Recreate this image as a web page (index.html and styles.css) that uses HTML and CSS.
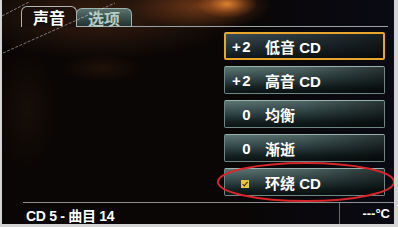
FILE: index.html
```html
<!DOCTYPE html>
<html lang="zh-CN">
<head>
<meta charset="utf-8">
<title>声音</title>
<link rel="stylesheet" href="styles.css">
</head>
<body>
<div class="screen">
  <div class="tabs">
    <div class="tab tab-active">声音</div>
    <div class="tab tab-idle">选项</div>
    <div class="tab-rule"></div>
  </div>
  <div class="content">
    <div class="btn btn-focus"><span class="val">+2</span><span class="lbl">低音 CD</span></div>
    <div class="btn"><span class="val">+2</span><span class="lbl">高音 CD</span></div>
    <div class="btn"><span class="val">0</span><span class="lbl">均衡</span></div>
    <div class="btn"><span class="val">0</span><span class="lbl">渐逝</span></div>
    <div class="btn"><span class="val"><span class="check"><svg viewBox="0 0 8 8" width="8" height="8"><path d="M1.6 4.2 L3.3 5.9 L6.6 1.8" fill="none" stroke="#4a3a10" stroke-width="1.2"/></svg></span></span><span class="lbl">环绕 CD</span></div>
  </div>
  <div class="footer">
    <div class="track">CD 5 - 曲目 14</div>
    <div class="temp">---°C</div>
  </div>
  <svg class="overlay" viewBox="0 0 392 224" width="392" height="224">
    <line x1="0" y1="16" x2="27" y2="2" stroke="rgba(255,255,255,0.55)" stroke-width="0.8" stroke-dasharray="3 1.5"/>
    <line x1="1" y1="53" x2="113" y2="3" stroke="rgba(255,255,255,0.55)" stroke-width="0.8" stroke-dasharray="3 1.5"/>
    <ellipse cx="304" cy="182" rx="88" ry="19" fill="none" stroke="#d8262a" stroke-width="2"/>
  </svg>
</div>
</body>
</html>
```

FILE: styles.css
```css
html, body {
  margin: 0;
  padding: 0;
  background: #d4d4d4;
}
body {
  width: 398px;
  height: 227px;
  overflow: hidden;
  font-family: "Liberation Sans", "Noto Sans CJK SC", sans-serif;
  font-weight: 700;
}
.screen {
  position: relative;
  margin-left: 2px;
  width: 392px;
  height: 224px;
  overflow: hidden;
  display: flex;
  flex-direction: column;
  background:
    radial-gradient(ellipse 30px 14px at 225px 4px, rgba(235,140,50,0.9), rgba(190,95,35,0.4) 60%, rgba(0,0,0,0) 100%),
    radial-gradient(ellipse 70px 24px at 200px 6px, rgba(150,75,30,0.7), rgba(0,0,0,0) 100%),
    radial-gradient(ellipse 140px 45px at 100px 15px, rgba(65,35,18,0.8), rgba(0,0,0,0) 100%),
    radial-gradient(ellipse 40px 14px at 100px 68px, rgba(55,28,12,0.5), rgba(0,0,0,0) 100%),
    radial-gradient(ellipse 30px 60px at 25px 110px, rgba(35,22,10,0.5), rgba(0,0,0,0) 100%),
    linear-gradient(to right, #0a0605 0%, #090605 60%, #0a0a14 100%);
}
.tabs {
  height: 27px;
  display: flex;
  align-items: flex-end;
  padding-left: 19px;
  box-sizing: border-box;
}
.tab {
  box-sizing: border-box;
  width: 56px;
  font-size: 16px;
  display: flex;
  align-items: center;
  justify-content: center;
  border: 1.5px solid #b4b4b4;
  border-bottom: none;
  border-radius: 6px 6px 0 0;
}
.tab-active {
  height: 21px;
  color: #ffffff;
  background: rgba(20,12,10,0.5);
}
.tab-idle {
  height: 19px;
  margin-left: -1px;
  color: #b4ccc4;
  border-color: #9fb3ad;
  border-bottom: 1.5px solid #a9b4b2;
  background: linear-gradient(to bottom, #5a726e, #3a4e4b 55%, #243230);
}
.tab-rule {
  flex: 1;
  margin-right: 6px;
  border-bottom: 1.5px solid #9aa4a6;
}
.content {
  flex: 1;
  display: flex;
  flex-direction: column;
  align-items: flex-start;
  padding: 5px 0 0 222px;
  gap: 6px;
}
.btn {
  box-sizing: border-box;
  width: 161px;
  height: 28px;
  display: flex;
  align-items: center;
  color: #ffffff;
  font-size: 15px;
  border: 1px solid #6f8784;
  border-top-color: #9ab1ad;
  border-radius: 2px;
  background:
    linear-gradient(to right, rgba(0,0,0,0) 0%, rgba(0,0,0,0.15) 50%, rgba(0,0,0,0.55) 100%),
    linear-gradient(to bottom, #5b7673 0%, #34484a 45%, #142020 80%, #0c1414 100%);
}
.btn-focus {
  border: 2px solid #e8a62c;
  background:
    linear-gradient(to right, rgba(0,0,0,0) 0%, rgba(0,0,0,0.6) 100%),
    linear-gradient(to bottom, #3c4c54 0%, #26343a 50%, #10181c 100%);
}
.val {
  width: 27px;
  text-align: right;
  flex: none;
  letter-spacing: 1.5px;
}
.btn-focus .val {
  width: 26px;
}
.lbl {
  margin-left: 13px;
}
.check {
  display: inline-flex;
  width: 8px;
  height: 8px;
  background: #e8c640;
  margin-right: 3px;
  vertical-align: middle;
}
.footer {
  height: 22px;
  box-sizing: border-box;
  margin-left: 21px;
  border-top: 1.5px solid #8e9292;
  display: flex;
  color: #ffffff;
}
.track {
  flex: 1;
  font-size: 14px;
  letter-spacing: -0.3px;
  padding: 2px 0 0 3px;
}
.temp {
  width: 55px;
  box-sizing: border-box;
  border-left: 1px solid #6a6e70;
  font-size: 13px;
  text-align: right;
  padding: 3px 4px 0 0;
}
.overlay {
  position: absolute;
  left: 0;
  top: 0;
  pointer-events: none;
}
```
